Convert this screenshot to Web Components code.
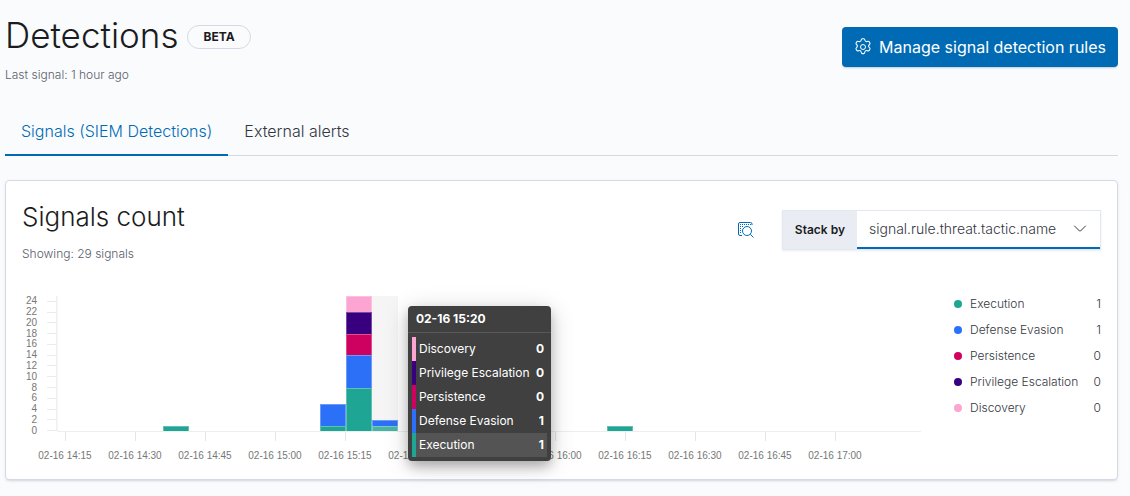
<!DOCTYPE html>
<html lang="en">
<head>
<meta charset="utf-8">
<meta name="viewport" content="width=device-width, initial-scale=1">
<title>Detections</title>
<style>
  body {
    margin: 0;
    padding: 14px 12px 16px 5px;
    background: #fafbfd;
    color: #343741;
    font: 300 16px/24px Inter, "Liberation Sans", sans-serif;
  }
</style>
</head>
<body>
<detections-page></detections-page>

<script>
const SERIES = {
  execution: { name: 'Execution', color: '#1ea593', value: 1 },
  evasion: { name: 'Defense Evasion', color: '#2b70f7', value: 1 },
  persistence: { name: 'Persistence', color: '#ce0060', value: 0 },
  escalation: { name: 'Privilege Escalation', color: '#38007e', value: 0 },
  discovery: { name: 'Discovery', color: '#fca5d3', value: 0 }
};
const SERIES_KEYS = Object.keys(SERIES);

const BUCKETS = 33;
const Y_MAX = 25;
const HOVERED = 12;
const DATA = [
  { bucket: 4, execution: 1 },
  { bucket: 10, execution: 1, evasion: 4 },
  { bucket: 11, execution: 8, evasion: 6, persistence: 4, escalation: 4, discovery: 3 },
  { bucket: 12, execution: 1, evasion: 1 },
  { bucket: 21, execution: 1 }
];

class ViewElement extends HTMLElement {
  connectedCallback() {
    if (this.shadowRoot) return;
    const root = this.attachShadow({ mode: 'open' });
    root.innerHTML = '<style>*{box-sizing:border-box}' + this.constructor.css + '</style>' + this.render();
  }
  render() { return '<slot></slot>'; }
}

class BetaBadge extends ViewElement {
  static css = `
    :host { display: inline-block; padding: 0 15px; border: 1px solid #d3dae6; border-radius: 12px;
      font-size: 12px; line-height: 22px; font-weight: 700; color: #1a1c21; text-transform: uppercase; }`;
}

class PrimaryButton extends ViewElement {
  static css = `
    :host { display: block; }
    button { display: flex; align-items: center; gap: 7px; height: 40px; padding: 0 12px; border: 0; border-radius: 4px;
      background: #006bb4; color: #fff; font: inherit; font-weight: 400; white-space: nowrap; cursor: pointer;
      box-shadow: 0 2px 2px -1px rgba(54, 97, 126, .3); }`;
  render() { return '<button type="button"><slot name="icon"></slot><span><slot></slot></span></button>'; }
}

class GearIcon extends ViewElement {
  static css = ':host, svg { display: block; width: 18px; height: 18px; }';
  render() {
    return `<svg viewBox="0 0 18 18" fill="none" stroke="currentColor" stroke-linejoin="round" aria-hidden="true">
      <path transform="translate(9 9) scale(1.080) translate(-9 -9)" d="M7.300 2.700Q7.500 1.300 8.300 1.300h1.400q.8 0 1 1.400c.3 1 1.200 1.500 2.200 1.200q1.400-.5 1.800.2l.7 1.200q.4.7-.6 1.600c-.8.7-.8 1.800 0 2.500q1 .9.6 1.600l-.7 1.200q-.4.7-1.800.2c-1-.3-1.900.2-2.200 1.200q-.2 1.500-1 1.500H8.300q-.8 0-1-1.500c-.3-1-1.200-1.500-2.200-1.200q-1.400.5-1.800-.2l-.7-1.200q-.4-.7.6-1.600c.8-.7.8-1.800 0-2.500q-1-.9-.6-1.600l.7-1.200q.4-.7 1.800-.2c1 .3 1.900-.2 2.200-1.200Z"/>
      <circle cx="9" cy="9" r="2.500"/></svg>`;
  }
}

class InspectIcon extends ViewElement {
  static css = `
    :host { display: block; }
    button { display: grid; place-items: center; width: 24px; height: 24px; padding: 0; border: 0; background: none; color: #006bb4; cursor: pointer; }
    svg { width: 16px; height: 16px; overflow: visible; }`;
  render() {
    return `<button type="button" aria-label="Inspect"><svg viewBox="0 0 16 16" fill="none" stroke="currentColor">
      <path d="M4 13.500H2A1.500 1.500 0 0 1 .5 12V2A1.500 1.500 0 0 1 2 .5h10.500A1.500 1.500 0 0 1 14 2v1"/>
      <path d="M2 2.500h11M2 4.500h4M2 6.500h2M2 8.500h2M2 10.500h2" stroke-dasharray="1 1"/>
      <circle cx="9" cy="9" r="4.500"/><path d="m12.300 12.300 3.200 3.200"/></svg></button>`;
  }
}

class TabBar extends ViewElement {
  static css = `
    :host { display: block; border-bottom: 1px solid #d3dae6; }
    div { display: flex; margin-bottom: -1px; }
    button { height: 48px; padding: 0 16px; border: 0; border-bottom: 2px solid transparent; background: none;
      color: #343741; font: inherit; font-weight: 350; cursor: pointer; }
    [aria-selected="true"] { color: #006bb4; border-color: #006bb4; }`;
  render() {
    return `<div role="tablist"><button type="button" role="tab" aria-selected="true">Signals (SIEM Detections)</button>
      <button type="button" role="tab" aria-selected="false">External alerts</button></div>`;
  }
}

class StackSelect extends ViewElement {
  static css = `
    :host { display: flex; height: 40px; border: 1px solid #e3e7ef; background: #fff; box-shadow: 0 1px 2px rgba(152, 162, 179, .2); }
    label { display: flex; align-items: center; padding: 0 12px; background: #e9edf3; color: #1a1c21; font-size: 12px; font-weight: 600; white-space: nowrap; }
    .control { display: grid; align-items: center; border-bottom: 2px solid #006bb4; }
    select, svg { grid-area: 1 / 1; }
    select { appearance: none; width: 243px; height: 36px; padding: 0 40px 0 12px; border: 0; background: transparent;
      color: #343741; font: inherit; font-size: 14px; font-weight: 350; outline: 0; }
    svg { justify-self: end; width: 16px; height: 16px; margin-right: 12px; pointer-events: none; }`;
  render() {
    return `<label for="stack">Stack by</label>
      <span class="control"><select id="stack"><option>signal.rule.threat.tactic.name</option></select>
      <svg viewBox="0 0 16 16" fill="none" stroke="#343741" stroke-linecap="round" aria-hidden="true"><path d="m2.500 5 5 5q.5.5 1 0l5-5"/></svg></span>`;
  }
}

class ChartTooltip extends ViewElement {
  static css = `
    :host { display: block; padding-bottom: 4px; border-radius: 4px; background: #404040; color: #fff;
      font: 400 12px/24px Inter, "Liberation Sans", sans-serif; white-space: nowrap;
      box-shadow: 0 6px 12px -1px rgba(0, 0, 0, .25), 0 4px 24px rgba(0, 0, 0, .18); }
    header { padding: 1px 8px; border-bottom: 1px solid #595959; font-weight: 700; margin-bottom: 4px; }
    table { width: calc(100% - 8px); margin: 0 4px; border-spacing: 0; }
    th { padding: 0 0 0 3px; border-left: 4px solid var(--series); text-align: left; font-weight: 400; }
    td { padding: 0 3px 0 4px; text-align: right; font-weight: 700; }
    .current { background: #545454; }`;
  render() {
    const rows = [...SERIES_KEYS].reverse().map(k => `<tr class="${k === 'execution' ? 'current' : ''}" style="--series:${SERIES[k].color}">
      <th scope="row">${SERIES[k].name}</th><td>${SERIES[k].value}</td></tr>`).join('');
    return `<header>02-16 15:20</header><table>${rows}</table>`;
  }
}

class SignalsHistogram extends ViewElement {
  static css = `
    :host { display: grid; grid-template-columns: 35px minmax(0, 1fr); grid-template-rows: 135px auto;
      color: #777; font: 400 10px/10px "Liberation Sans", Arial, sans-serif; }
    .y { display: flex; flex-direction: column; height: 140px; }
    .y span { flex: 1; display: flex; align-items: center; justify-content: flex-end; gap: 10px; }
    .y span::after { content: ""; width: 10px; height: 1px; background: #ececec; }
    .plot { position: relative; display: grid; grid-template-columns: repeat(${BUCKETS}, minmax(0, 1fr)); grid-template-rows: 100%;
      box-shadow: -1px 0 0 #f0f0f0, 0 1px 0 #eee; border-left: 1px solid #f5f5f5; }
    .cursor { grid-row: 1; background: #f5f5f5; }
    .bar { grid-row: 1; display: flex; flex-direction: column-reverse; }
    .bar i { border: solid rgba(255, 255, 255, .3); border-width: 1px 1px 0; background: var(--series); }
    .hovered i:first-child { opacity: .8; }
    .x { grid-column: 1 / -1; margin-left: 8px; display: grid; grid-template-columns: repeat(12, minmax(0, 70fr)) minmax(0, 51fr); }
    .x span { display: flex; flex-direction: column; align-items: center; gap: 10px; white-space: nowrap; }
    .x span::before { content: ""; width: 1px; height: 10px; background: #e6e6e6; }
    chart-tooltip { position: absolute; top: 10px; left: calc(100% * ${HOVERED + 1} / ${BUCKETS} + 10px); width: 143px; }`;
  render() {
    const y = Array.from({ length: 13 }, (_, i) => `<span>${24 - i * 2}</span>`).join('');
    const x = Array.from({ length: 12 }, (_, i) => {
      const t = 14 * 60 + 15 + i * 15;
      return `<span>02-16 ${Math.floor(t / 60)}:${String(t % 60).padStart(2, '0')}</span>`;
    }).join('');
    const bars = DATA.map(d => `<div class="bar ${d.bucket === HOVERED ? 'hovered' : ''}" style="grid-column:${d.bucket + 1}">` +
      SERIES_KEYS.filter(k => d[k]).map(k => `<i style="height:${d[k] * 100 / Y_MAX}%;--series:${SERIES[k].color}"></i>`).join('') + '</div>').join('');
    return `<div class="y">${y}</div><div class="plot"><div class="cursor" style="grid-column:${HOVERED + 1}"></div>${bars}<chart-tooltip></chart-tooltip></div><div class="x">${x}</div>`;
  }
}

class ChartLegend extends ViewElement {
  static css = `
    :host { display: block; font-size: 12px; line-height: 26px; }
    ul { margin: 0; padding: 0; list-style: none; }
    li { display: flex; align-items: center; gap: 8px; white-space: nowrap; }
    li::before { content: ""; width: 8px; height: 8px; border-radius: 50%; background: var(--series); }
    b { margin-left: auto; font-weight: inherit; }`;
  render() {
    return '<ul>' + SERIES_KEYS.map(k => `<li style="--series:${SERIES[k].color}"><span>${SERIES[k].name}</span><b>${SERIES[k].value}</b></li>`).join('') + '</ul>';
  }
}

class SignalsPanel extends ViewElement {
  static css = `
    :host { display: block; padding: 16px; border: 1px solid #d3dae6; border-radius: 4px; background: #fff;
      box-shadow: 0 2px 2px -1px rgba(152, 162, 179, .3), 0 1px 5px -2px rgba(152, 162, 179, .3); }
    header { display: flex; align-items: center; gap: 24px; height: 66px; margin-bottom: 33px; }
    .title { flex: 1; }
    h2 { margin: 0; font-size: 26px; line-height: 40px; font-weight: 300; color: #1a1c21; }
    p { margin: 7px 0 0; font-size: 12px; line-height: 20px; color: #5a606b; }
    .body { display: grid; grid-template-columns: minmax(0, 1fr) 147px; gap: 33px; min-height: 167px; }
    chart-legend { margin-top: -5px; }`;
  render() {
    return `<header><div class="title"><h2>Signals count</h2><p>Showing: 29 signals</p></div>
      <inspect-icon></inspect-icon><stack-select></stack-select></header>
      <div class="body"><signals-histogram></signals-histogram><chart-legend></chart-legend></div>`;
  }
}

class DetectionsPage extends ViewElement {
  static css = `
    :host { display: block; }
    header { display: flex; justify-content: space-between; align-items: flex-start; margin-bottom: 23px; }
    .heading { display: flex; align-items: center; gap: 9px; }
    h1 { margin: 0; font-size: 35px; line-height: 42px; font-weight: 300; color: #1a1c21; }
    beta-badge { margin-top: 4px; }
    primary-button { margin-top: 13px; }
    p { margin: 9px 0 0; font-size: 12px; line-height: 20px; color: #5a606b; }
    tab-bar { margin-bottom: 24px; }`;
  render() {
    return `<header><div><div class="heading"><h1>Detections</h1><beta-badge>Beta</beta-badge></div><p>Last signal: 1 hour ago</p></div>
      <primary-button><gear-icon slot="icon"></gear-icon>Manage signal detection rules</primary-button></header>
      <tab-bar></tab-bar><signals-panel></signals-panel>`;
  }
}

customElements.define('beta-badge', BetaBadge);
customElements.define('primary-button', PrimaryButton);
customElements.define('gear-icon', GearIcon);
customElements.define('inspect-icon', InspectIcon);
customElements.define('tab-bar', TabBar);
customElements.define('stack-select', StackSelect);
customElements.define('chart-tooltip', ChartTooltip);
customElements.define('signals-histogram', SignalsHistogram);
customElements.define('chart-legend', ChartLegend);
customElements.define('signals-panel', SignalsPanel);
customElements.define('detections-page', DetectionsPage);
</script>
</body>
</html>
